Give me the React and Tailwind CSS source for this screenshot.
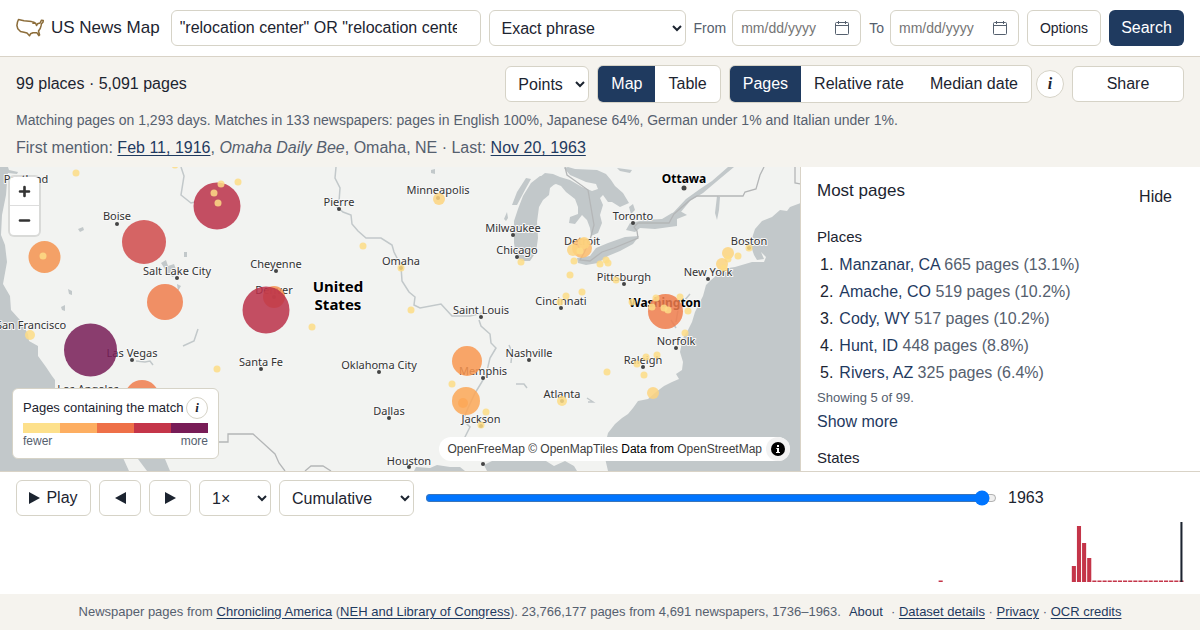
import { useState } from "react";

const WATER = [
  // pacific coast
  "M0 167H8L9 170L18 172L17 174L8 173L7 182L6 195L2 215L1 235L5 245L7 262L3 284L10 296L11 310L20 320L28 334L29 341L38 346L38 356L46 367L52 376L55 380V388L70 394L95 400L106 425L118 447L124 460L129 471H0Z",
  "M130 440L152 440L165 459L170 471H147L138 459Z",
  // atlantic coast
  "M801 203L790 207L787 211L780 210L772 217L762 221L755 229L752 238L749 244L752 249L754 255L757 260L764 259L761 252L766 257L764 262L752 262L735 267L722 269L717 275L711 280L706 285L703 296L699 304L695 312L692 322L688 330L684 336L682 342L680 352L683 362L682 370L676 374L679 379L672 382L664 386L656 392L648 399L638 401L633 408L628 414L622 418L615 424L608 433L605 445L605 458L608 471H801Z",
  // gulf of mexico
  "M414 471L416 467L430 468L437 465L450 467L460 467L465 471ZM487 471L484 465L492 461L546 461L554 466L565 461L574 466L577 471Z",
  // lake michigan
  "M512 205L517 192L526 178L531 179L526 188L517 205ZM504 219L507 212L508 218L506 221ZM540 176L531 183L523 196L518 209L514 221L514 243L516 256L522 261L530 261L536 252L538 238L537 222L539 207L543 200L549 195L550 188L556 183L556 178Z",
  // lake huron and georgian bay
  "M540 177L545 173L553 174L560 177L570 180L582 187L592 191L598 189L596 184L586 182L577 178L570 175L564 168L568 167L575 169L597 170L606 174L611 180L615 186L623 193L629 203L620 207L612 202L608 202L603 195L600 198L603 205L600 215L602 223L598 233L591 236L590 228L587 220L582 215L575 224L569 223L570 217L578 214L578 207L575 199L566 192L561 186L556 184L548 186L540 186Z",
  // erie and ontario
  "M577 258L590 256L596 248L608 243L625 237L639 236L633 244L620 251L608 256L598 263L586 265L578 263Z",
  "M626 230L630 223L645 220L662 219L672 213L680 211L687 215L677 219L677 226L655 229L640 228L635 232Z",
  "M672 214L686 199L700 189L712 181L728 167H734L716 182L703 193L690 201L680 213Z",
  "M717 196L720 197L719 210L717 220L715 213ZM629 207L633 204L635 210L631 214ZM617 168L632 170L630 173L620 171Z",
  // small inland lakes
  "M161 263L166 260L168 266L174 264L177 272L173 277L168 274ZM177 284L181 286L178 291ZM184 252H187V257H184ZM78 229L83 227L84 230L80 232ZM68 289L72 291L72 295L69 294ZM61 307L65 305L65 311L62 310ZM431 170L435 169V174L431 173Z",
];

const RIVERS = [
  "M336 167L335 178L340 188L339 202L337 207L343 212L351 215L352 224L358 231L366 238L381 238L392 245L394 252L401 266L402 281L409 292L415 297L414 305L420 308L441 304L452 316L470 316L482 313",
  "M479 320L481 326L490 334L491 343L496 348L490 358L486 375L480 385L475 393L468 408L463 420L470 427L465 437L463 447",
  "M181 167L184 176L181 195L191 203L195 202",
  "M198 329L194 341L183 346M136 361L145 362L150 361L153 365",
  "M516 384L524 384L527 388M509 345L512 352L511 363M587 398L593 402L588 402",
  "M690 294L684 301L678 310L676 322M671 320L676 328",
];

const BORDERS = [
  "M219 442H228V434H253L263 443L275 454L279 463L285 471M305 471L311 466H323L331 471",
  "M565 167L567 175L574 180L588 190L594 225L590 240L584 253L580 260L590 261L602 252L614 248L638 238L637 231L634 227L638 223H669L674 214L690 200L697 196H743L745 192L756 189L760 175L764 167",
  "M795 167V183L801 184",
];

const CITIES = [
  ["Portland", 26, 183],
  ["Boise", 117, 220, 117, 224],
  ["Salt Lake City", 177, 275, 177, 278],
  ["Cheyenne", 276, 268, 276, 271],
  ["Denver", 274, 294, 274, 297],
  ["Pierre", 339, 206, 339, 209],
  ["Omaha", 401, 265, 401, 268],
  ["Minneapolis", 438, 194, 438, 198],
  ["Milwaukee", 513, 232, 513, 235],
  ["Chicago", 517, 254, 517, 257],
  ["San Francisco", 31, 329],
  ["Las Vegas", 132, 357, 132, 360],
  ["Los Angeles", 88, 393],
  ["Santa Fe", 261, 366, 261, 369],
  ["Oklahoma City", 379, 369, 379, 372],
  ["Dallas", 389, 415, 389, 418],
  ["Houston", 409, 465, 409, 467],
  ["Saint Louis", 481, 314, 481, 317],
  ["Memphis", 483, 375, 483, 378],
  ["Nashville", 529, 357, 529, 360],
  ["Jackson", 481, 423, 481, 426],
  ["Atlanta", 562, 398, 562, 401],
  ["Raleigh", 643, 364, 643, 367],
  ["Norfolk", 676, 345, 676, 348],
  ["Cincinnati", 561, 305, 561, 308],
  ["Pittsburgh", 624, 281, 624, 284],
  ["Detroit", 582, 245],
  ["Toronto", 633, 220, 633, 223],
  ["New York", 708, 276, 708, 279],
  ["Boston", 749, 245, 749, 248],
];

const COLORS = ["#fde08b", "#fdae61", "#ee7048", "#c43549", "#781c57"];

// x, y, radius, fill
const POINTS = [
  [274, 297, 11, "#f5924f"],
  [90.5, 350, 26.5, "#781c57"],
  [266, 310, 23.5, "#bb3049"],
  [217, 206, 23.5, "#bb3049"],
  [144, 242, 22, "#d04a4b"],
  [165, 302, 18, "#f07c4c"],
  [142, 397, 17, "#f07c4c"],
  [665.5, 311.5, 17.5, "#f07c4c"],
  [44.5, 257, 16, "#f5924f"],
  [467, 361, 15, "#f99750"],
  [466, 401, 14, "#fca757"],
  [582, 248, 10, "#fdbb6b"],
  [463, 403, 5, "#fca757"],
];

const SMALL_POINTS = [
  [76, 173, 4], [175, 165, 4], [221, 184, 4], [238, 182, 4], [214, 193, 4],
  [218, 203, 4], [43, 256, 4], [30, 335, 5], [217, 369, 4], [312, 327, 4],
  [363, 246, 4], [401, 268, 4], [411, 310, 4], [439, 199, 6], [521, 262, 4],
  [452, 384, 4], [486, 412, 4], [481, 425, 4], [573, 250, 6], [584, 243, 6],
  [580, 251, 4], [574, 261, 4], [570, 275, 4], [600, 264, 4], [606, 260, 4],
  [608, 263, 4], [616, 280, 4], [566, 296, 4], [582, 292, 4], [560, 302, 4],
  [632, 302, 4], [656, 298, 4], [680, 297, 4], [652, 307, 4], [664, 308, 4],
  [668, 310, 4], [688, 311, 4], [728, 253, 6], [738, 256, 4], [728, 259, 4],
  [722, 264, 6], [724, 268, 4], [749, 248, 4], [685, 333, 4], [657, 355, 4],
  [646, 357, 4], [637, 364, 4], [644, 375, 4], [607, 372, 4], [653, 393, 6],
  [562, 401, 5],
];

const PLACES = [
  ["Manzanar, CA", "665 pages (13.1%)"],
  ["Amache, CO", "519 pages (10.2%)"],
  ["Cody, WY", "517 pages (10.2%)"],
  ["Hunt, ID", "448 pages (8.8%)"],
  ["Rivers, AZ", "325 pages (6.4%)"],
];

const FIRST_YEAR = 1736;
const YEARS = 228;
const COUNTS = { 1916: 1.5, 1942: 16, 1943: 56, 1944: 39, 1945: 24 };
for (let y = 1946; y <= 1963; y++) COUNTS[y] = 1.5;

const control =
  "h-9 rounded-md border border-[#d6d3c7] bg-white text-base text-[#1c2430]";
const link = "text-[#1f3a5f] underline underline-offset-2";

function DateField({ id, label }) {
  return (
    <div className="flex items-center gap-1.5">
      <label htmlFor={id} className="text-sm text-[#55606e]">
        {label}
      </label>
      <div className="flex h-9 w-[129px] items-center rounded-md border border-[#d6d3c7] bg-white px-2">
        <input
          id={id}
          type="text"
          placeholder="mm/dd/yyyy"
          className="w-full min-w-0 flex-1 bg-transparent text-sm outline-none placeholder:text-[#757575]"
        />
        <button type="button" aria-label={`Pick ${label} date`} className="mr-0.5">
          <svg width="16" height="16" viewBox="0 0 16 16" fill="none" stroke="#55606e">
            <rect x="1.5" y="2.5" width="13" height="12" rx="1" />
            <path d="M1.5 5.5H14.5M4.5 1V4M11.5 1V4" />
          </svg>
        </button>
      </div>
    </div>
  );
}

function InfoButton({ className }) {
  return (
    <button
      type="button"
      aria-label="About this view"
      className={`flex shrink-0 items-center justify-center rounded-full border border-[#d6d3c7] bg-white font-['Liberation_Serif',serif] font-bold italic text-[#1c2430] ${className}`}
    >
      i
    </button>
  );
}

function Segmented({ options }) {
  const [active, setActive] = useState(options[0]);
  return (
    <div className="flex h-[38px] overflow-hidden rounded-md border border-[#d6d3c7] bg-white">
      {options.map((option) => (
        <button
          key={option}
          type="button"
          aria-pressed={option === active}
          onClick={() => setActive(option)}
          className={
            option === active
              ? "bg-[#1f3a5f] px-[13px] text-white"
              : "px-[13px] text-[#1c2430]"
          }
        >
          {option}
        </button>
      ))}
    </div>
  );
}

function Header() {
  return (
    <header className="flex items-center gap-2 border-b border-[#d9d3c7] bg-white px-4 py-2.5">
      <a href="#" className="mr-[3px] flex items-center gap-[7px] text-[17px] whitespace-nowrap">
        <svg width="28" height="20" viewBox="0 0 28 20" fill="none" stroke="#8c6d3a" strokeWidth="1.5" strokeLinejoin="round">
          <path d="M2.5 1.5L8 2.8L15.5 3.6L18 4.3L17 5.2L19.5 5L20.5 7.5L21.5 5.8L24 5L25.5 2.2L27.3 2.6L27 4.2L25.5 5.6L25 8L24.2 10.5L22.5 13L23.6 17L22.8 17.6L21 14.8L17 14.8L14.5 15.8L13.5 17.8L11 15L8 14.2L4.5 13.6L1.8 10.8L0.9 7.5L1.5 4Z" />
        </svg>
        US News Map
      </a>
      <input
        type="search"
        aria-label="Search phrase"
        defaultValue={'"relocation center" OR "relocation centers"'}
        className={`${control} min-w-0 flex-1 px-2 outline-none`}
      />
      <select aria-label="Match type" className={`${control} w-[197px] px-2`}>
        <option>Exact phrase</option>
        <option>All words</option>
      </select>
      <DateField id="from" label="From" />
      <DateField id="to" label="To" />
      <button type="button" className="h-9 w-[74px] rounded-md border border-[#d6d3c7] bg-white text-sm">
        Options
      </button>
      <button type="submit" className="h-9 w-[75px] rounded-md bg-[#1f3a5f] text-white">
        Search
      </button>
    </header>
  );
}

function Summary() {
  return (
    <section className="px-4 pt-2 pb-[7px]">
      <div className="flex items-center gap-2">
        <p className="flex-1">99 places · 5,091 pages</p>
        <select aria-label="Map style" className={`${control} w-[84px] px-2`}>
          <option>Points</option>
          <option>States</option>
        </select>
        <Segmented options={["Map", "Table"]} />
        <div className="flex items-center gap-1">
          <Segmented options={["Pages", "Relative rate", "Median date"]} />
          <InfoButton className="size-7 text-base" />
        </div>
        <button type="button" className={`${control} w-28`}>
          Share
        </button>
      </div>
      <p className="mt-[5px] text-sm leading-6 text-[#55606e]">
        Matching pages on 1,293 days. Matches in 133 newspapers: pages in
        English 100%, Japanese 64%, German under 1% and Italian under 1%.
      </p>
      <p className="mt-1 leading-6 text-[#55606e]">
        First mention: <a href="#first" className={link}>Feb 11, 1916</a>,{" "}
        <i>Omaha Daily Bee</i>, Omaha, NE · Last:{" "}
        <a href="#last" className={link}>Nov 20, 1963</a>
      </p>
    </section>
  );
}

function MapCanvas() {
  return (
    <svg
      className="absolute inset-0 size-full font-['Noto_Sans',sans-serif]"
      viewBox="0 167 800 304"
      preserveAspectRatio="xMidYMid slice"
      role="img"
      aria-label="Map of pages by place"
    >
      <rect x="0" y="167" width="801" height="305" fill="#f2f3f1" />
      {WATER.map((d) => (
        <path key={d} d={d} fill="#c2c8ca" />
      ))}
      {RIVERS.map((d) => (
        <path key={d} d={d} fill="none" stroke="#c2c8ca" strokeWidth="1.5" />
      ))}
      {BORDERS.map((d) => (
        <path key={d} d={d} fill="none" stroke="#b4b6b7" strokeWidth="1.3" />
      ))}
      <g
        fill="#333"
        fontSize="11"
        textAnchor="middle"
        stroke="#f8f8f8"
        strokeWidth="2"
        strokeLinejoin="round"
        paintOrder="stroke"
      >
        {CITIES.map(([name, x, y]) => (
          <text key={name} x={x} y={y}>{name}</text>
        ))}
        <g fill="#000" fontWeight="700">
          <text x="684" y="183" fontSize="12">Ottawa</text>
          <text x="665" y="307" fontSize="12">Washington</text>
          <text x="338" y="292" fontSize="15">United</text>
          <text x="338" y="310" fontSize="15">States</text>
        </g>
      </g>
      {CITIES.filter((c) => c.length > 3).map(([name, , , cx, cy]) => (
        <circle key={name} cx={cx} cy={cy} r="2" fill="#444" />
      ))}
      <circle cx="684" cy="188" r="2.5" fill="#444" />
      <circle cx="483" cy="464" r="2" fill="#444" />
      {POINTS.map(([x, y, r, fill]) => (
        <circle key={`${x}-${y}`} cx={x} cy={y} r={r} fill={fill} opacity="0.85" />
      ))}
      {SMALL_POINTS.map(([x, y, r]) => (
        <circle key={`${x}-${y}`} cx={x} cy={y} r={r === 4 ? 3.5 : r} fill={r === 6 ? "#fdd47f" : "#fddc86"} opacity="0.85" />
      ))}
    </svg>
  );
}

function Legend() {
  return (
    <div className="absolute bottom-3 left-3 w-[207px] rounded-md border border-[#d6d3c7] bg-white px-2.5 pt-2 pb-[9px] text-[13px] text-[#1c2430]">
      <div className="flex items-center justify-between whitespace-nowrap">
        Pages containing the match
        <InfoButton className="size-[22px] text-[13px]" />
      </div>
      <div className="mt-1 flex h-2.5">
        {COLORS.map((color) => (
          <span key={color} className="flex-1" style={{ background: color }} />
        ))}
      </div>
      <div className="flex justify-between text-xs leading-4 text-[#55606e]">
        <span>fewer</span>
        <span>more</span>
      </div>
    </div>
  );
}

function MapPanel() {
  return (
    <div className="relative w-2/3 overflow-hidden">
      <MapCanvas />
      <div className="absolute top-2.5 left-2.5 w-[29px] divide-y divide-[#ddd] rounded bg-white shadow-[0_0_0_2px_rgba(0,0,0,0.1)]">
        <button type="button" aria-label="Zoom in" className="flex h-[29px] w-full items-center justify-center">
          <svg width="13" height="13" viewBox="0 0 13 13" stroke="#333" strokeWidth="2.6" strokeLinecap="round">
            <path d="M6.5 2V11M2 6.5H11" />
          </svg>
        </button>
        <button type="button" aria-label="Zoom out" className="flex h-[29px] w-full items-center justify-center">
          <svg width="13" height="13" viewBox="0 0 13 13" stroke="#333" strokeWidth="2.6" strokeLinecap="round">
            <path d="M2 6.5H11" />
          </svg>
        </button>
      </div>
      <Legend />
      <div className="absolute right-2.5 bottom-2.5 flex items-center rounded-full bg-white pl-2 text-xs leading-6 text-black">
        <p className="mr-1 whitespace-nowrap">
          <a href="#ofm" className="text-[#404040]">OpenFreeMap</a>{" "}
          <a href="#omt" className="text-[#404040]">© OpenMapTiles</a> Data from{" "}
          <a href="#osm" className="text-[#404040]">OpenStreetMap</a>
        </p>
        <button type="button" aria-label="Toggle attribution" className="flex size-6 items-center justify-center rounded-full bg-[#f2f2f2]">
          <svg width="14" height="14" viewBox="0 0 14 14">
            <circle cx="7" cy="7" r="7" />
            <path d="M5.3 6H8V10H9V11H5V10H6V7H5.3ZM6 3H8V5H6Z" fill="#fff" />
          </svg>
        </button>
      </div>
    </div>
  );
}

function Sidebar() {
  return (
    <aside className="w-1/3 overflow-hidden border-l border-[#d9d3c7] bg-white px-4 pt-3">
      <div className="flex items-start justify-between">
        <h2 className="text-[17px] leading-6">Most pages</h2>
        <button type="button" className="h-9 px-3 leading-9">Hide</button>
      </div>
      <h3 className="mt-2.5 text-[15px] leading-6">Places</h3>
      <ol className="mt-0.5">
        {PLACES.map(([place, detail], i) => (
          <li key={place} className="flex h-[27px] items-center gap-1.5 pl-[3px]">
            <span>{i + 1}.</span>
            <span className="text-[#55606e]">
              <a href="#place" className="text-[#1f3a5f]">{place}</a> {detail}
            </span>
          </li>
        ))}
      </ol>
      <p className="text-[13px] leading-6 text-[#55606e]">Showing 5 of 99.</p>
      <button type="button" className="block leading-6 text-[#1f3a5f]">Show more</button>
      <h3 className="mt-3 text-[15px] leading-6">States</h3>
    </aside>
  );
}

function Timeline() {
  const [year, setYear] = useState(1963);
  return (
    <section className="border-t border-[#d9d3c7] bg-white px-4 pt-2 pb-3">
      <div className="flex items-center gap-2">
        <button type="button" className={`${control} flex w-[75px] items-center justify-center gap-1.5`}>
          <svg width="11" height="12" viewBox="0 0 11 12" fill="#1c2430">
            <path d="M0 0L11 6L0 12Z" />
          </svg>
          Play
        </button>
        <button type="button" aria-label="Previous year" className={`${control} flex w-[42px] items-center justify-center`}>
          <svg width="11" height="12" viewBox="0 0 11 12" fill="#1c2430">
            <path d="M11 0L0 6L11 12Z" />
          </svg>
        </button>
        <button type="button" aria-label="Next year" className={`${control} flex w-[42px] items-center justify-center`}>
          <svg width="11" height="12" viewBox="0 0 11 12" fill="#1c2430">
            <path d="M0 0L11 6L0 12Z" />
          </svg>
        </button>
        <select aria-label="Speed" className={`${control} w-[72px] px-2`}>
          <option>1×</option>
          <option>2×</option>
        </select>
        <select aria-label="Mode" className={`${control} w-[135px] px-2`}>
          <option>Cumulative</option>
          <option>By year</option>
        </select>
        <input
          type="range"
          aria-label="Year"
          min="1736"
          max="1966"
          value={year}
          onChange={(e) => setYear(Number(e.target.value))}
          className="mx-[3px] min-w-0 flex-1"
        />
        <output className="w-44">{year}</output>
      </div>
      <svg
        className="mt-1.5 block h-[60px] w-full"
        viewBox="0 0 228 60"
        preserveAspectRatio="none"
        role="img"
        aria-label="Pages per year"
      >
        {Object.entries(COUNTS).map(([y, h]) => (
          <rect key={y} x={y - FIRST_YEAR + 0.1} y={60 - h} width="0.8" height={h} fill="#c43549" />
        ))}
        <rect x={YEARS - 0.7} y="0" width="0.4" height="60" fill="#1c2430" />
      </svg>
    </section>
  );
}

function Footer() {
  return (
    <footer className="px-4 text-center text-[13px] leading-9 text-[#55606e]">
      Newspaper pages from <a href="#ca" className={link}>Chronicling America</a>{" "}
      (<a href="#neh" className={link}>NEH and Library of Congress</a>).
      23,766,177 pages from 4,691 newspapers, 1736–1963.
      <button type="button" className="mx-2 text-[#1f3a5f]">About</button>·{" "}
      <a href="#data" className={link}>Dataset details</a> ·{" "}
      <a href="#privacy" className={link}>Privacy</a> ·{" "}
      <a href="#ocr" className={link}>OCR credits</a>
    </footer>
  );
}

function App() {
  return (
    <div className="flex h-screen flex-col bg-[#f5f3ee] font-['Liberation_Sans',Arial,sans-serif] text-base text-[#1c2430]">
      <Header />
      <Summary />
      <main className="flex min-h-0 flex-1">
        <MapPanel />
        <Sidebar />
      </main>
      <Timeline />
      <Footer />
    </div>
  );
}

export default App;
